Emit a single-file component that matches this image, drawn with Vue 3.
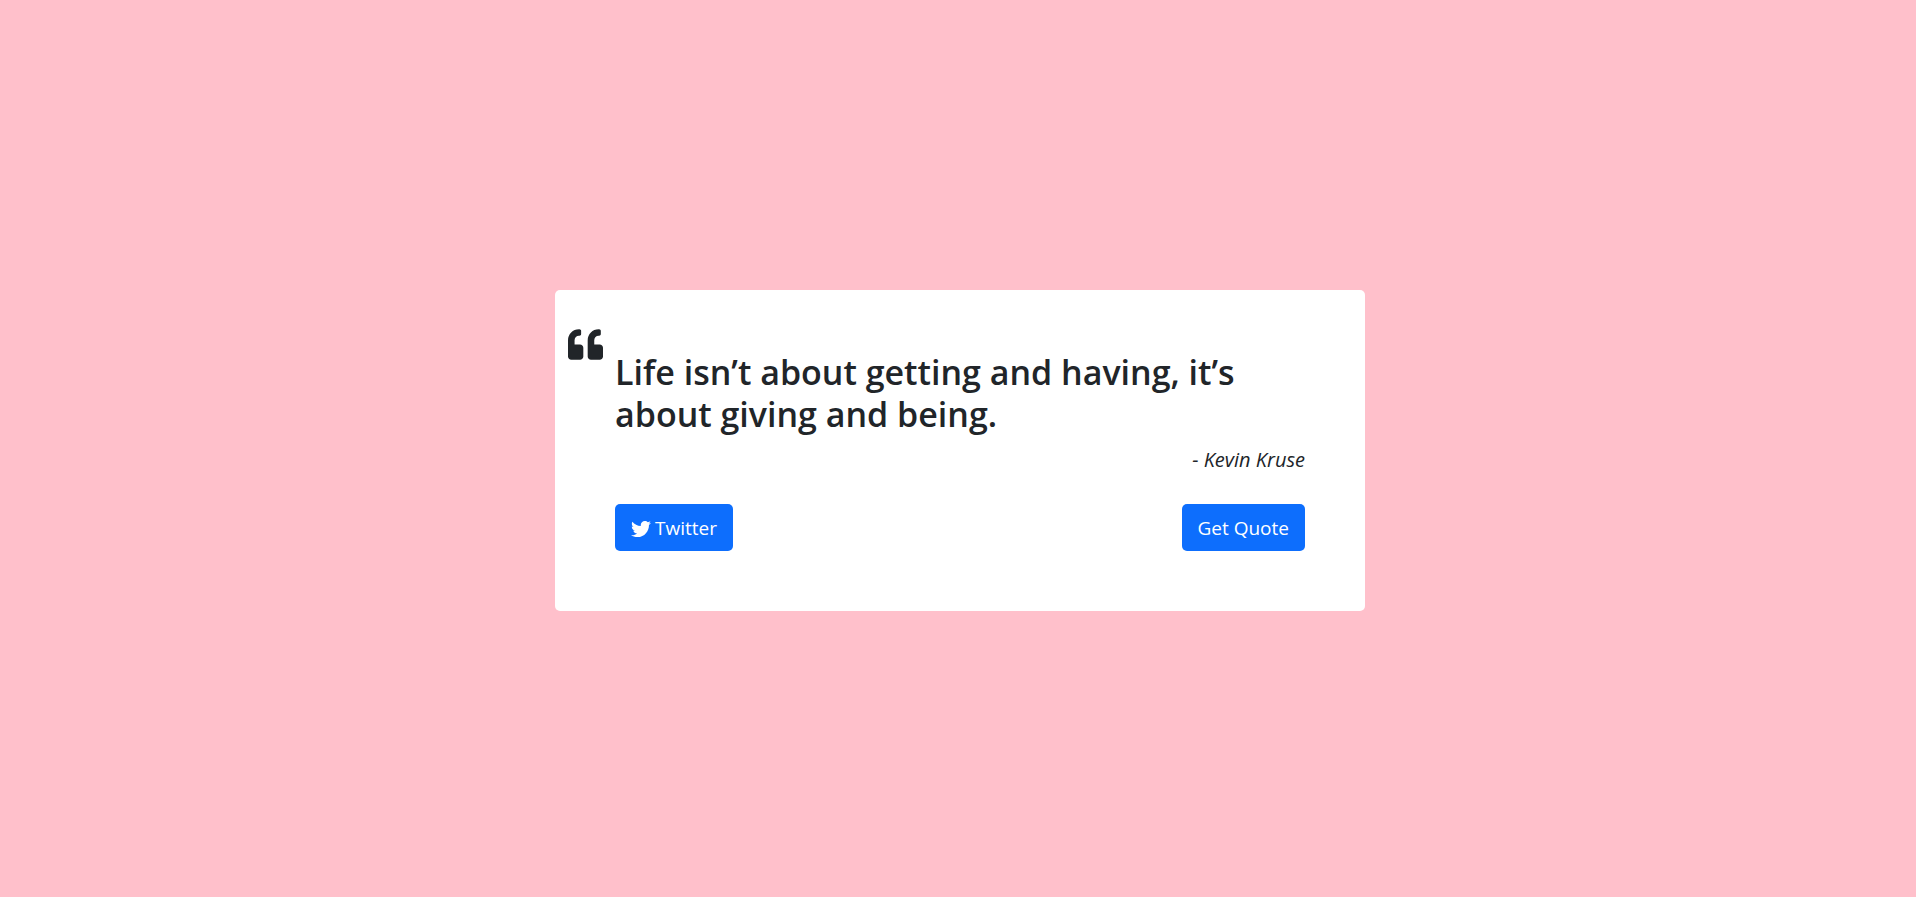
<script setup>
import { ref } from 'vue'

const quotes = [
  { text: 'Life isn’t about getting and having, it’s about giving and being.', author: 'Kevin Kruse' },
]
const index = ref(0)
const nextQuote = () => {
  index.value = (index.value + 1) % quotes.length
}
</script>

<template>
  <main class="page">
    <section class="card">
      <svg class="mark" viewBox="0 0 512 512" aria-hidden="true">
        <path d="M464 256h-80v-64c0-35.3 28.7-64 64-64h8c13.3 0 24-10.7 24-24V56c0-13.3-10.7-24-24-24h-8c-88.4 0-160 71.6-160 160v240c0 26.5 21.5 48 48 48h128c26.5 0 48-21.5 48-48V304c0-26.5-21.5-48-48-48zm-288 0H96v-64c0-35.3 28.7-64 64-64h8c13.3 0 24-10.7 24-24V56c0-13.3-10.7-24-24-24h-8C71.6 32 0 103.6 0 192v240c0 26.5 21.5 48 48 48h128c26.5 0 48-21.5 48-48V304c0-26.5-21.5-48-48-48z" />
      </svg>
      <h2 class="quote">{{ quotes[index].text }}</h2>
      <p class="author">- {{ quotes[index].author }}</p>
      <div class="actions">
        <a class="btn" href="#">
          <svg class="bird" viewBox="0 0 512 512" aria-hidden="true">
            <path d="M459.37 151.716c.325 4.548.325 9.097.325 13.645 0 138.72-105.583 298.558-298.558 298.558-59.452 0-114.68-17.219-161.137-47.106 8.447.974 16.568 1.299 25.34 1.299 49.055 0 94.213-16.568 130.274-44.832-46.132-.975-84.792-31.188-98.112-72.772 6.498.974 12.995 1.624 19.818 1.624 9.421 0 18.843-1.3 27.614-3.573-48.081-9.747-84.143-51.98-84.143-102.985v-1.299c13.969 7.797 30.214 12.67 47.431 13.319-28.264-18.843-46.781-51.005-46.781-87.391 0-19.492 5.197-37.36 14.294-52.954 51.655 63.675 129.3 105.258 216.365 109.807-1.624-7.797-2.599-15.918-2.599-24.04 0-57.828 46.782-104.934 104.934-104.934 30.213 0 57.502 12.67 76.67 33.137 23.715-4.548 46.456-13.32 66.599-25.34-7.798 24.366-24.366 44.833-46.132 57.827 21.117-2.273 41.584-8.122 60.426-16.243-14.292 20.791-32.161 39.308-52.628 54.253z" />
          </svg>
          <span>Twitter</span>
        </a>
        <button class="btn" type="button" @click="nextQuote">Get Quote</button>
      </div>
    </section>
  </main>
</template>

<style>
body {
  margin: 0;
  background: #ffc0cb;
}
</style>

<style scoped>
.page {
  box-sizing: border-box;
  min-height: 100vh;
  padding: 4px 0 0 4px;
  display: flex;
  align-items: center;
  justify-content: center;
  background: #ffc0cb;
  color: #212529;
  font-family: "Open Sans", "Noto Sans", sans-serif;
}
.card {
  position: relative;
  box-sizing: border-box;
  width: 100%;
  max-width: 810px;
  padding: 61px 60px 60px;
  background: #fff;
  border-radius: 5px;
}
.mark {
  position: absolute;
  left: 13px;
  top: 37px;
  width: 35px;
  height: 35px;
  fill: currentColor;
}
.quote {
  margin: 0 0 10px;
  font-size: 34px;
  line-height: 42px;
  font-weight: 600;
}
.author {
  margin: 0 0 29px;
  font-size: 20px;
  line-height: 30px;
  font-style: italic;
  text-align: right;
}
.actions {
  display: flex;
  justify-content: space-between;
}
.btn {
  display: flex;
  align-items: center;
  gap: 4px;
  padding: 9px 16px 7px;
  border: 0;
  border-radius: 5px;
  background: #0d6efd;
  color: #fff;
  font-family: inherit;
  font-size: 19px;
  line-height: 31px;
  text-decoration: none;
  cursor: pointer;
}
.bird {
  width: 20px;
  height: 20px;
  fill: currentColor;
}
</style>
